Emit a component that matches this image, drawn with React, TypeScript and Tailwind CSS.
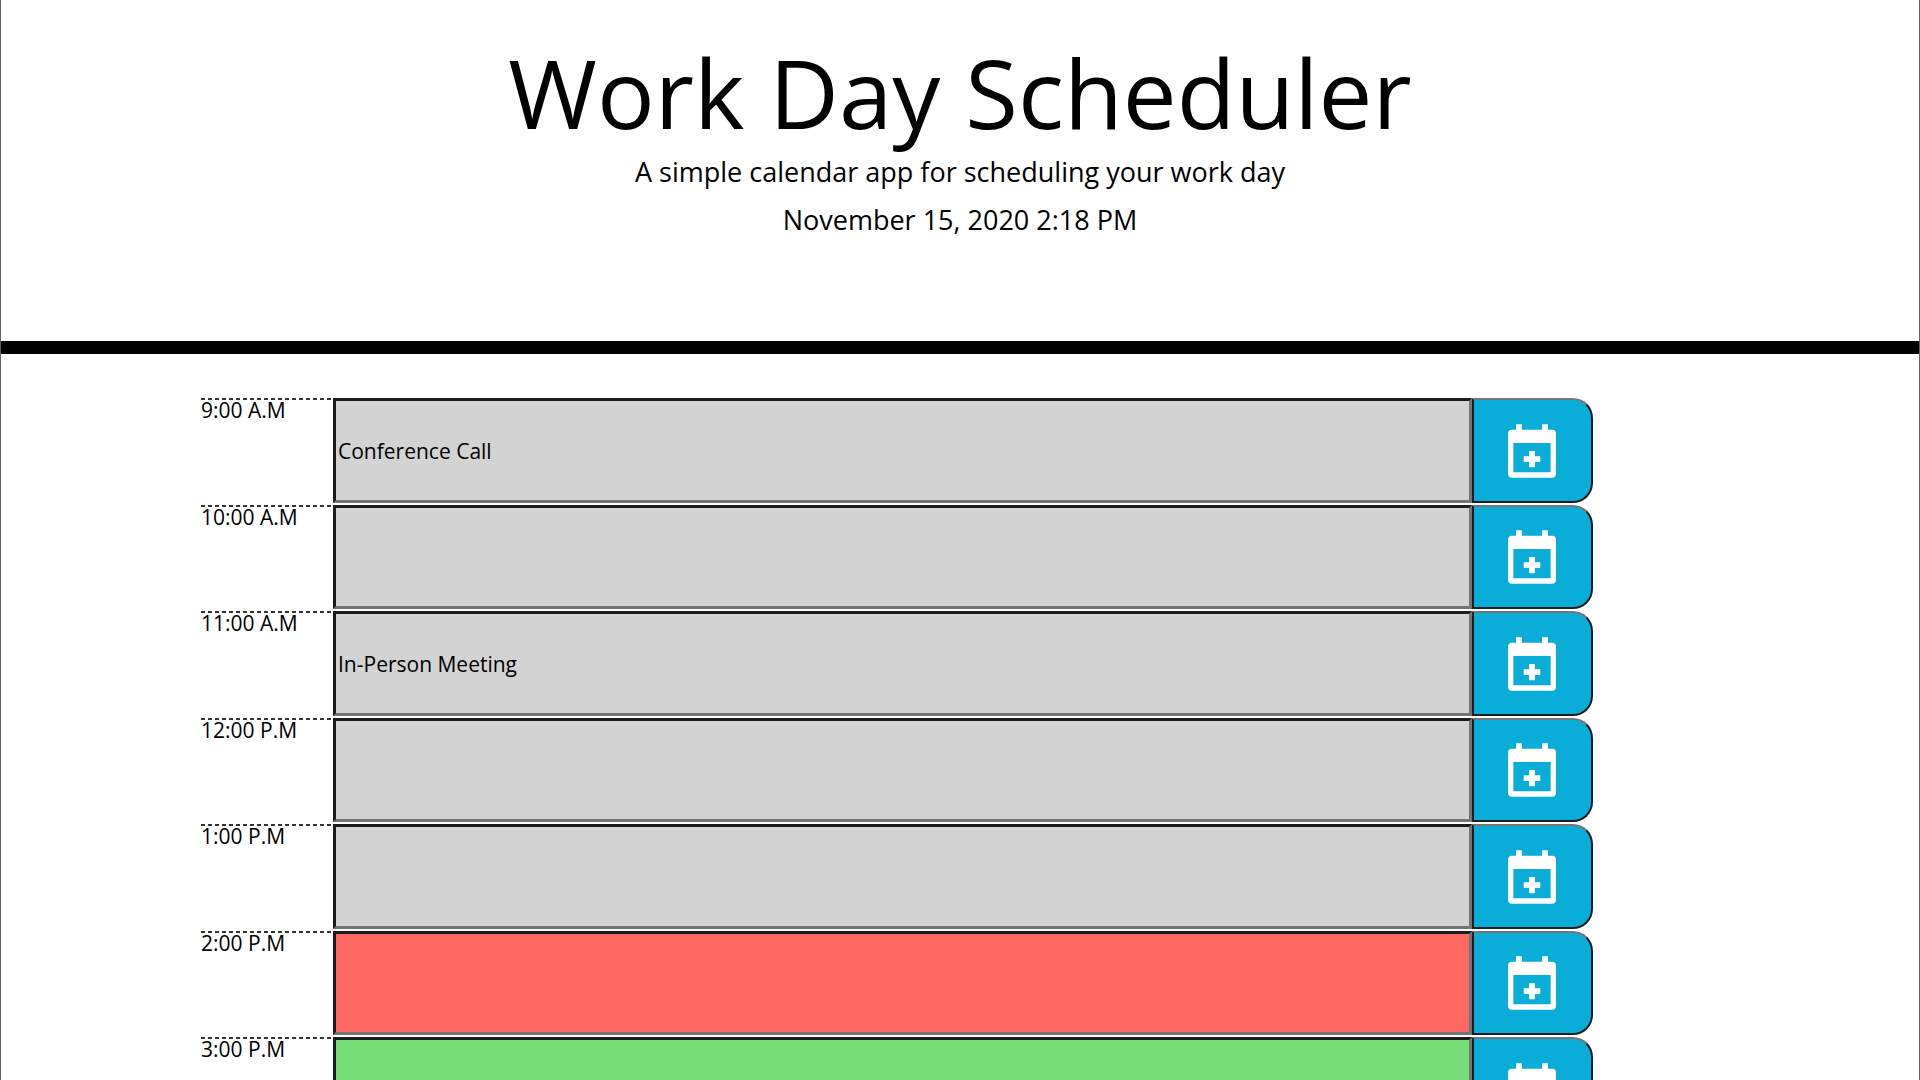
import { useState } from "react";

type Phase = "past" | "present" | "future";

const hours: { label: string; phase: Phase; note: string }[] = [
  { label: "9:00 A.M", phase: "past", note: "Conference Call" },
  { label: "10:00 A.M", phase: "past", note: "" },
  { label: "11:00 A.M", phase: "past", note: "In-Person Meeting" },
  { label: "12:00 P.M", phase: "past", note: "" },
  { label: "1:00 P.M", phase: "past", note: "" },
  { label: "2:00 P.M", phase: "present", note: "" },
  { label: "3:00 P.M", phase: "future", note: "" },
];

const phaseColor: Record<Phase, string> = {
  past: "bg-[#d3d3d3]",
  present: "bg-[#ff6961]",
  future: "bg-[#77dd77]",
};

function CalendarPlus() {
  return (
    <svg viewBox="3 1 18 20" className="h-[54px] w-12" fill="currentColor" aria-hidden="true">
      <path
        fillRule="evenodd"
        d="M18 3V1h-2.2v2H8.2V1H6v2H4.5A1.5 1.5 0 0 0 3 4.5v15A1.5 1.5 0 0 0 4.500 21h15a1.500 1.500 0 0 0 1.500-1.500v-15A1.500 1.500 0 0 0 19.500 3zM5 8h14v11H5z"
      />
      <path d="M10.900 11h2.200v2h2v2.100h-2v2h-2.200v-2h-2V13h2z" />
    </svg>
  );
}

function HourRow({ label, phase, note }: { label: string; phase: Phase; note: string }) {
  const [text, setText] = useState(note);
  const id = "hour-" + label.replace(/[^0-9AP]/g, "");
  return (
    <li className="flex odd:h-[107px] even:h-[106px]">
      <label
        htmlFor={id}
        className="w-[132px] shrink-0 bg-[repeating-linear-gradient(90deg,#333_0_4px,transparent_4px_7px)] bg-[length:100%_2px] bg-no-repeat text-[21px] leading-6"
      >
        {label}
      </label>
      <input
        id={id}
        type="text"
        value={text}
        onChange={(e) => setText(e.target.value)}
        className={`mb-0.5 w-3/4 min-w-0 border-3 border-t-[#1c1b1f] border-r-[#747474] border-b-[#747474] border-l-[#1c1b1f] px-0.5 pt-0.5 text-[21px] outline-none ${phaseColor[phase]}`}
      />
      <button
        type="button"
        aria-label={`Save ${label}`}
        className="mb-0.5 flex w-[8%] items-center justify-center rounded-r-[20px] border-2 border-t-[#767676] border-r-[#1c1b1f] border-b-[#1c1b1f] border-l-[#1c1b1f] bg-[#0aadd8] text-white"
      >
        <CalendarPlus />
      </button>
    </li>
  );
}

export default function App() {
  return (
    <div className="h-screen overflow-hidden border-r border-l border-[#666] bg-white font-['Open_Sans',sans-serif] text-black">
      <header className="border-b-13 border-black pt-8 pb-[101px] text-center">
        <h1 className="text-[96px] leading-[120px]">Work Day Scheduler</h1>
        <p className="text-[27px] leading-10">A simple calendar app for scheduling your work day</p>
        <p className="mt-2 text-[27px] leading-10">November 15, 2020 2:18 PM</p>
      </header>
      <main className="mx-auto mt-11 max-w-[1518px]">
        <ul>
          {hours.map((hour) => (
            <HourRow key={hour.label} {...hour} />
          ))}
        </ul>
      </main>
    </div>
  );
}
